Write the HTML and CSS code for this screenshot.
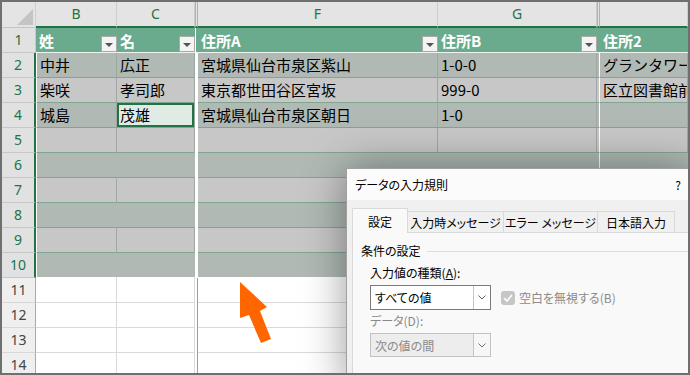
FILE: index.html
```html
<!DOCTYPE html>
<html lang="ja">
<head>
  <meta charset="UTF-8">
  <title>データの入力規則</title>
  <link rel="stylesheet" href="styles.css">
</head>
<body>

  <div class="frame">
    <div class="sheet">
      <div class="row hdr">
        <div class="corner"><span class="tri"></span></div>
        <div class="ch">B</div>
        <div class="ch">C</div>
        <div class="dv"></div>
        <div class="ch">F</div>
        <div class="ch">G</div>
        <div class="dv"></div>
        <div class="ch"></div>
      </div>

      <div class="row thead">
        <div class="rh">1</div>
        <div class="c">姓<span class="flt"></span></div>
        <div class="c">名<span class="flt"></span></div>
        <div class="dv"></div>
        <div class="c">住所A<span class="flt"></span></div>
        <div class="c">住所B<span class="flt"></span></div>
        <div class="dv dv2"></div>
        <div class="c">住所2</div>
      </div>

      <div class="row data dk">
        <div class="rh">2</div>
        <div class="c b">中井</div>
        <div class="c">広正</div>
        <div class="dv"></div>
        <div class="c">宮城県仙台市泉区紫山</div>
        <div class="c">1-0-0</div>
        <div class="dv dv2"></div>
        <div class="c">グランタワー仙台</div>
      </div>
      <div class="row data lt">
        <div class="rh">3</div>
        <div class="c b">柴咲</div>
        <div class="c">孝司郎</div>
        <div class="dv"></div>
        <div class="c">東京都世田谷区宮坂</div>
        <div class="c">999-0</div>
        <div class="dv dv2"></div>
        <div class="c">区立図書館前</div>
      </div>
      <div class="row data dk">
        <div class="rh">4</div>
        <div class="c b">城島</div>
        <div class="c act">茂雄</div>
        <div class="dv"></div>
        <div class="c">宮城県仙台市泉区朝日</div>
        <div class="c">1-0</div>
        <div class="dv dv2"></div>
        <div class="c"></div>
      </div>
      <div class="row data lt">
        <div class="rh">5</div>
        <div class="c b"></div><div class="c"></div><div class="dv"></div>
        <div class="c"></div><div class="c"></div><div class="dv dv2"></div><div class="c"></div>
      </div>
      <div class="row data dk nv">
        <div class="rh">6</div>
        <div class="c b"></div><div class="c"></div><div class="dv"></div>
        <div class="c"></div><div class="c"></div><div class="dv dv2"></div><div class="c"></div>
      </div>
      <div class="row data lt">
        <div class="rh">7</div>
        <div class="c b"></div><div class="c"></div><div class="dv"></div>
        <div class="c"></div><div class="c"></div><div class="dv dv2"></div><div class="c"></div>
      </div>
      <div class="row data dk nv">
        <div class="rh">8</div>
        <div class="c b"></div><div class="c"></div><div class="dv"></div>
        <div class="c"></div><div class="c"></div><div class="dv dv2"></div><div class="c"></div>
      </div>
      <div class="row data lt">
        <div class="rh">9</div>
        <div class="c b"></div><div class="c"></div><div class="dv"></div>
        <div class="c"></div><div class="c"></div><div class="dv dv2"></div><div class="c"></div>
      </div>
      <div class="row data dk nv last">
        <div class="rh">10</div>
        <div class="c b"></div><div class="c"></div><div class="dv"></div>
        <div class="c"></div><div class="c"></div><div class="dv dv2"></div><div class="c"></div>
      </div>

      <div class="row blank">
        <div class="rh">11</div>
        <div class="c"></div><div class="c"></div><div class="dv"></div>
        <div class="c"></div><div class="c"></div><div class="dv"></div><div class="c"></div>
      </div>
      <div class="row blank">
        <div class="rh">12</div>
        <div class="c"></div><div class="c"></div><div class="dv"></div>
        <div class="c"></div><div class="c"></div><div class="dv"></div><div class="c"></div>
      </div>
      <div class="row blank">
        <div class="rh">13</div>
        <div class="c"></div><div class="c"></div><div class="dv"></div>
        <div class="c"></div><div class="c"></div><div class="dv"></div><div class="c"></div>
      </div>
      <div class="row blank">
        <div class="rh">14</div>
        <div class="c"></div><div class="c"></div><div class="dv"></div>
        <div class="c"></div><div class="c"></div><div class="dv"></div><div class="c"></div>
      </div>
    </div>

    <!-- ダイアログ -->
    <div class="dialog">
      <div class="dlg-title">
        <span>データの入力規則</span>
        <span>?</span>
      </div>
      <div class="dlg-body">
        <div class="tabs">
          <div class="tab on t1">設定</div>
          <div class="tab t2">入力時メッセージ</div>
          <div class="tab t3">エラー メッセージ</div>
          <div class="tab t4">日本語入力</div>
        </div>
        <div class="panel">
          <div class="grp">条件の設定</div>
          <div class="fld">
            <div class="lbl">入力値の種類(<u>A</u>):</div>
            <div class="line">
              <div class="sel">
                <span class="txt">すべての値</span>
                <span class="btn"><svg width="8" height="5" viewBox="0 0 8 5"><polyline points="0.5,0.5 4,4 7.5,0.5" fill="none" stroke="#606060" stroke-width="1"/></svg></span>
              </div>
              <div class="chk">
                <span class="box"><svg width="10" height="8" viewBox="0 0 10 8"><polyline points="1,4 4,7 9,1" fill="none" stroke="#fff" stroke-width="1.6"/></svg></span>
                空白を無視する(B)
              </div>
            </div>
            <div class="lbl dis">データ(D):</div>
            <div class="sel dis">
              <span class="txt">次の値の間</span>
              <span class="btn"><svg width="8" height="5" viewBox="0 0 8 5"><polyline points="0.5,0.5 4,4 7.5,0.5" fill="none" stroke="#707070" stroke-width="1"/></svg></span>
            </div>
          </div>
        </div>
      </div>
    </div>

    <svg class="arrow" width="40" height="66" viewBox="0 0 40 66">
      <polygon points="2,2 29,27 22,31 33,59 23,63 11,35 2,38" fill="#ff6600"/>
    </svg>
  </div>

</body>
</html>
```

FILE: styles.css
```css
body {
  margin: 0;
  font-family: "Noto Sans CJK JP", sans-serif;
  background: #fff;
}

.frame {
  position: relative;
  width: 690px;
  height: 375px;
  box-sizing: border-box;
  border: 2px solid #6f6f6f;
  overflow: hidden;
  background: #fff;
}

.row {
  display: grid;
  grid-template-columns: 34px 81px 78px 3px 240px 159px 3px 88px;
  height: 25px;
}

.row > div {
  box-sizing: border-box;
  overflow: hidden;
  white-space: nowrap;
}

/* 列見出し */
.hdr {
  height: 26px;
}

.corner {
  background: #e4e4e4;
  border-right: 1px solid #cfcfcf;
  border-bottom: 1px solid #c4c4c4;
  display: flex;
  justify-content: flex-end;
  align-items: flex-end;
  padding: 0 2px 2px 0;
}

.tri {
  width: 0;
  height: 0;
  border-left: 16px solid transparent;
  border-bottom: 16px solid #c4c4c4;
}

.ch {
  background: #e4e4e4;
  border-right: 1px solid #cdcdcd;
  border-bottom: 2px solid #217346;
  color: #217346;
  font: 14px/24px "Noto Sans", sans-serif;
  text-align: center;
}

.hdr .dv {
  background: #e4e4e4;
  border-left: 1px solid #b0b0b0;
  border-right: 1px solid #b0b0b0;
  border-bottom: 2px solid #217346;
}

/* 行見出し */
.rh {
  background: #e1e1e1;
  color: #217346;
  font: 14px/24px "Noto Sans", sans-serif;
  text-align: center;
  border-bottom: 1px solid #c8c8c8;
  border-right: 2px solid #217346;
}

.thead .rh {
  border-right: 1px solid #c8c8c8;
}

.blank .rh {
  background: #efefef;
  color: #444;
  border-right: 1px solid #a9a9a9;
  border-bottom-color: #d8d8d8;
}

/* テーブル見出し行 */
.thead .c {
  background: #69ab8c;
  color: #fff;
  font-size: 15px;
  font-weight: bold;
  display: flex;
  align-items: center;
  justify-content: space-between;
  padding-left: 3px;
  border-bottom: 1px solid #eef3f0;
}

.thead .dv {
  background: #69ab8c;
  border-left: 1px solid #fff;
  border-bottom: 1px solid #eef3f0;
}

.thead .dv2 {
  border-left: none;
}

.flt {
  width: 16px;
  height: 16px;
  box-sizing: border-box;
  border: 1px solid #a9a9a9;
  background: #f4f4f4;
  align-self: flex-end;
  display: flex;
  align-items: center;
  justify-content: center;
}

.flt::after {
  content: "";
  border-left: 4px solid transparent;
  border-right: 4px solid transparent;
  border-top: 4px solid #555;
  margin-top: 2px;
}

/* データ行 */
.dk { background: #b0b9b4; }
.lt { background: #c7c7c7; }

.data .c {
  font-size: 15px;
  line-height: 24px;
  padding-left: 3px;
  color: #000;
  border-bottom: 1px solid #7fa68f;
  border-right: 1px solid #a0a6a3;
}

.data .c.b {
  border-left: 1px solid #fff;
}

.nv .c {
  border-right-color: transparent;
}

.data .dv {
  background: #fff;
}

.data .dv2 {
  background: transparent;
  border-right: 1px solid #fff;
  border-bottom: 1px solid #7fa68f;
}

.last .c {
  border-bottom-color: #fff;
}

.data .c.act {
  background: #e0ebe5;
  box-shadow: inset 0 0 0 2px #217346;
}

/* 空白行 */
.blank {
  background: #fff;
}

.blank .c {
  border-right: 1px solid #dadada;
  border-bottom: 1px solid #dadada;
}

.blank .dv {
  border-right: 1px solid #9c9c9c;
}

/* ダイアログ */
.dialog {
  position: absolute;
  left: 344px;
  top: 166px;
  width: 344px;
  height: 220px;
  background: #f0f0f0;
  border: 1px solid #a0a0a0;
  box-shadow: 0 0 40px rgba(0, 0, 0, 0.4);
  font-size: 12px;
  font-feature-settings: "palt";
  color: #000;
  z-index: 2;
}

.dlg-title {
  height: 31px;
  background: #fbfbfb;
  display: flex;
  justify-content: space-between;
  align-items: center;
  padding: 0 10px 0 8px;
}

.dlg-body {
  padding: 8px 0 0 5px;
}

.tabs {
  display: flex;
  align-items: flex-end;
  height: 24px;
}

.tab {
  height: 21px;
  box-sizing: border-box;
  border: 1px solid #d9d9d9;
  border-bottom: none;
  margin-left: -1px;
  display: flex;
  align-items: center;
  justify-content: center;
  background: #f0f0f0;
}

.tab.on {
  height: 25px;
  margin: 0 0 -1px 0;
  background: #f9f9f9;
  position: relative;
  z-index: 1;
}

.t1 { width: 56px; }
.t2 { width: 97px; }
.t3 { width: 95px; }
.t4 { width: 78px; }

.panel {
  background: #f9f9f9;
  border-top: 1px solid #d9d9d9;
  border-left: 1px solid #d9d9d9;
  padding: 10px 0 0 8px;
  height: 200px;
}

.grp {
  display: flex;
  align-items: center;
  line-height: 16px;
}

.grp::after {
  content: "";
  flex: 1;
  height: 1px;
  background: #dcdcdc;
  margin-left: 6px;
}

.fld {
  padding-left: 9px;
}

.lbl {
  line-height: 16px;
  margin-top: 6px;
}

.lbl.dis {
  margin-top: 3px;
  color: #8a8a8a;
}

.line {
  display: flex;
  align-items: center;
  margin-top: 4px;
}

.sel {
  width: 121px;
  height: 25px;
  box-sizing: border-box;
  border: 1px solid #7a7a7a;
  background: #fff;
  display: flex;
  align-items: center;
  padding-left: 4px;
}

.sel .txt {
  flex: 1;
}

.sel .btn {
  width: 17px;
  height: 100%;
  box-sizing: border-box;
  border-left: 1px solid #c5c5c5;
  display: flex;
  align-items: center;
  justify-content: center;
}

.sel.dis {
  margin-top: 4px;
  height: 24px;
  background: #ededed;
  border-color: #c2c2c2;
  color: #8a8a8a;
}

.sel.dis .btn {
  background: #f7f7f7;
}

.chk {
  display: flex;
  align-items: center;
  margin-left: 10px;
  color: #8a8a8a;
}

.box {
  width: 14px;
  height: 14px;
  border-radius: 3px;
  background: #c6c6c6;
  margin-right: 4px;
  display: flex;
  align-items: center;
  justify-content: center;
}

.arrow {
  position: absolute;
  left: 236px;
  top: 278px;
  z-index: 3;
}
```
